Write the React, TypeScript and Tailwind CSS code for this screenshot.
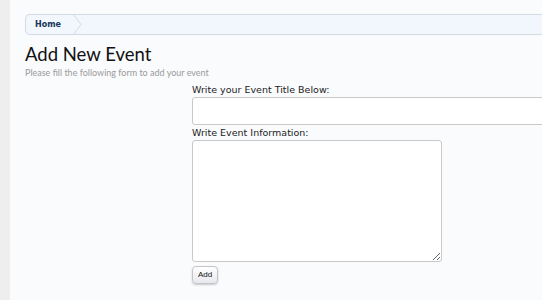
const App = () => {
  return (
    <div className="flex h-[300px] w-[542px] overflow-hidden bg-[#eeeeee] font-['DejaVu_Sans',sans-serif]">
      <div className="ml-[10px] flex-1 bg-[#fafbfd] pl-[15px] pt-[14px]">
        <div className="flex h-[21px] items-center rounded-l-[5px] border border-r-0 border-[#d2dbe3] bg-[#f1f7fc]">
          <span className="relative flex h-full items-center pl-[9px] pr-[14px] text-[8px] font-bold text-[#18365a]">
            Home
            <svg
              className="absolute right-[-8px] top-[-1px]"
              width="10"
              height="21"
              viewBox="0 0 10 21"
            >
              <path d="M0 0 L8 10.5 L0 21" fill="#f1f7fc" stroke="#d2dbe3" />
            </svg>
          </span>
        </div>
        <h1 className="mt-[8px] font-['Lato',sans-serif] text-[18.5px] leading-[23px] text-[#111]">
          Add New Event
        </h1>
        <p className="mt-[2px] font-['Lato',sans-serif] text-[9px] leading-[10px] text-[#9a9a9a]">
          Please fill the following form to add your event
        </p>
        <form className="ml-[167px] mt-[6px] flex flex-col items-start">
          <label className="text-[9.5px] leading-[12px] text-[#222]">
            Write your Event Title Below:
          </label>
          <input
            type="text"
            className="mt-[1px] h-[28px] w-[360px] rounded-[3px] border border-[#c9c9c9] bg-white"
          />
          <label className="mt-[2px] text-[9.5px] leading-[12px] text-[#222]">
            Write Event Information:
          </label>
          <textarea className="mt-[1px] h-[122px] w-[250px] rounded-[3px] border border-[#c9c9c9] bg-white" />
          <button
            type="button"
            className="mt-[4px] h-[18px] w-[26px] rounded-[4px] border border-[#c4c4c8] bg-gradient-to-b from-white to-[#e8e8ee] text-[8px] text-[#111] shadow-[0_1px_2px_rgba(0,0,0,0.2)] font-['Liberation_Sans',sans-serif]"
          >
            Add
          </button>
        </form>
      </div>
    </div>
  );
};

export default App;
